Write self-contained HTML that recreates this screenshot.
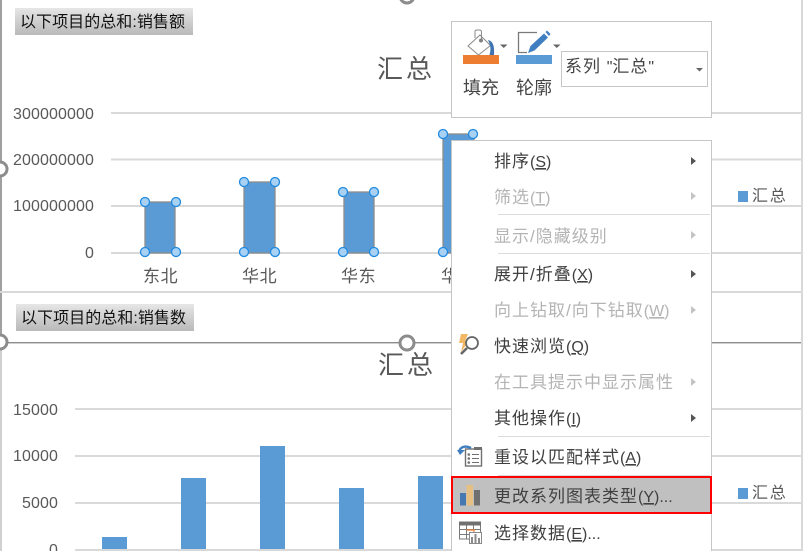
<!DOCTYPE html>
<html><head><meta charset="utf-8">
<style>
html,body{margin:0;padding:0;background:#fff}
svg{display:block}
text{font-family:"Liberation Sans","Noto Sans CJK SC",sans-serif}
.ax{font-size:16px;fill:#595959;letter-spacing:.1px}
.cat{font-size:17px;fill:#595959;letter-spacing:.6px}
.m{font-size:17px;fill:#404040;letter-spacing:1px}
.d{font-size:17px;fill:#b4b4b4;letter-spacing:1px}
.l{font-size:16px;letter-spacing:0}
.u{font-size:16px;letter-spacing:0;text-decoration:underline}
.h{fill:#a9d1f3;stroke:#1f8ae0;stroke-width:1.3}
.r{fill:#fff;stroke:#8c8c8c;stroke-width:3}
.g{stroke:#d9d9d9;stroke-width:2}
</style></head>
<body>
<svg width="803" height="551" viewBox="0 0 803 551" xmlns="http://www.w3.org/2000/svg" style="width:803px;height:551px;overflow:hidden">
<defs><linearGradient id="c" x1="0" y1="0" x2="0" y2="1"><stop offset="0" stop-color="#e6e6e6"/><stop offset="1" stop-color="#b9b9b9"/></linearGradient></defs>
<rect width="803" height="551" fill="#fff"/>

<!-- frames -->
<rect x="0" y="0" width="2" height="292" fill="#a0a0a0"/>
<rect x="0" y="292" width="2" height="50" fill="#a0a0a0"/>
<rect x="0" y="343" width="2" height="208" fill="#d0d0d0"/>
<rect x="0" y="291" width="803" height="2" fill="#d9d9d9"/>
<rect x="0" y="342" width="803" height="1.4" fill="#8c8c8c"/>
<rect x="801" y="0" width="2" height="551" fill="#d9d9d9"/>
<circle cx="0" cy="169" r="7" class="r"/>
<circle cx="0" cy="342" r="7" class="r"/>
<circle cx="407" cy="-4" r="7" class="r"/>
<circle cx="407" cy="343" r="7" class="r"/>

<!-- chips -->
<rect x="15" y="8" width="178" height="27" fill="url(#c)"/>
<text x="20" y="27" font-size="16" letter-spacing=".05" fill="#111">以下项目的总和:销售额</text>
<rect x="16" y="304" width="178" height="27" fill="url(#c)"/>
<text x="21" y="323" font-size="16" letter-spacing=".05" fill="#111">以下项目的总和:销售数</text>

<!-- titles -->
<text x="377" y="78" font-size="26" letter-spacing="3" fill="#595959">汇总</text>
<text x="378" y="374" font-size="26" letter-spacing="3" fill="#595959">汇总</text>

<!-- top chart -->
<g class="g"><line x1="111" x2="803" y1="113" y2="113"/><line x1="111" x2="803" y1="159.5" y2="159.5"/><line x1="111" x2="803" y1="206" y2="206"/><line x1="111" x2="803" y1="253" y2="253"/></g>
<g class="ax" text-anchor="end">
<text x="94" y="119">300000000</text><text x="94" y="165">200000000</text><text x="94" y="211">100000000</text><text x="94" y="258">0</text>
</g>
<g fill="#5b9bd5" stroke="#8c8c8c" stroke-width="1.3">
<rect x="145" y="202" width="30" height="51"/>
<rect x="244" y="182" width="31" height="71"/>
<rect x="344" y="192" width="30" height="61"/>
<rect x="443" y="134" width="31" height="119"/>
</g>
<g class="h">
<circle cx="145" cy="202" r="4.5"/><circle cx="176" cy="202" r="4.5"/><circle cx="145" cy="252" r="4.5"/><circle cx="176" cy="252" r="4.5"/>
<circle cx="244" cy="182" r="4.5"/><circle cx="275" cy="182" r="4.5"/><circle cx="244" cy="252" r="4.5"/><circle cx="275" cy="252" r="4.5"/>
<circle cx="343" cy="192" r="4.5"/><circle cx="374" cy="192" r="4.5"/><circle cx="343" cy="252" r="4.5"/><circle cx="374" cy="252" r="4.5"/>
<circle cx="443" cy="134" r="4.5"/><circle cx="473" cy="134" r="4.5"/><circle cx="443" cy="252" r="4.5"/>
</g>
<g class="cat">
<text x="143" y="282">东北</text><text x="242" y="282">华北</text><text x="341" y="282">华东</text><text x="441" y="282">华南</text>
</g>
<rect x="738" y="191" width="10" height="11" fill="#5b9bd5"/>
<text x="752" y="201" font-size="16" letter-spacing="1.8" fill="#595959">汇总</text>

<!-- bottom chart -->
<g class="g"><line x1="75" x2="803" y1="409" y2="409"/><line x1="75" x2="803" y1="456" y2="456"/><line x1="75" x2="803" y1="503" y2="503"/><line x1="75" x2="803" y1="550" y2="550"/></g>
<g class="ax" text-anchor="end">
<text x="58" y="415">15000</text><text x="58" y="461">10000</text><text x="58" y="508">5000</text><text x="58" y="555">0</text>
</g>
<g fill="#5b9bd5">
<rect x="102" y="537" width="25" height="12"/>
<rect x="181" y="478" width="25" height="71"/>
<rect x="260" y="446" width="25" height="103"/>
<rect x="339" y="488" width="25" height="61"/>
<rect x="418" y="476" width="25" height="73"/>
</g>
<rect x="738" y="488" width="10" height="11" fill="#5b9bd5"/>
<text x="752" y="498" font-size="16" letter-spacing="1.8" fill="#595959">汇总</text>

<!-- toolbar -->
<rect x="451.5" y="21.5" width="260" height="96" fill="#fff" stroke="#c6c6c6"/>
<path d="M480 35 L490.500 45.500 L478.500 55 L468 46 Z" fill="#fff" stroke="#8a8a8a" stroke-width="1"/>
<path d="M475 38 V31.500 Q475 30 477 30 H479.500 Q481.500 30 481.500 32 V40" fill="none" stroke="#8a8a8a" stroke-width="1"/>
<circle cx="481" cy="40.500" r="2" fill="#808080"/>
<path d="M488 40 Q495 41 494 55 H489.500 Q492 47 488 40Z" fill="#3f73b0"/>
<path d="M500 44.500 h7.500 l-3.750 3.500z" fill="#666"/>
<rect x="463" y="55" width="36" height="9" fill="#ed7d31"/>
<text x="463" y="94" font-size="18" fill="#444">填充</text>
<path d="M537 32.500 H518.500 V52.500 H527" fill="none" stroke="#7a7a7a" stroke-width="1.300"/>
<path d="M528 53 L530.500 46 L544 33.500 L548 37.500 L534.500 50.500 Z" fill="#3f7fc1"/>
<path d="M545.500 32 L547 30.500 L550.500 34 L549 36Z" fill="#3f7fc1"/>
<path d="M553 44.500 h7.500 l-3.750 3.500z" fill="#666"/>
<rect x="516" y="55" width="36" height="9" fill="#5b9bd5"/>
<text x="516" y="94" font-size="18" fill="#444">轮廓</text>
<rect x="561.500" y="51.500" width="146" height="35" fill="#fff" stroke="#c6c6c6"/>
<text x="565" y="72" font-size="17" letter-spacing="1" fill="#444">系列 <tspan class="l" style="font-family:'Liberation Sans'">"</tspan>汇总<tspan class="l" style="font-family:'Liberation Sans'">"</tspan></text>
<path d="M696 68 h7 l-3.500 3.500z" fill="#666"/>

<!-- menu -->
<rect x="451.500" y="140.500" width="260" height="412" fill="#fff" stroke="#c6c6c6"/>
<g fill="#dcdcdc">
<rect x="498" y="214" width="212" height="1"/><rect x="498" y="253" width="212" height="1"/>
<rect x="498" y="436" width="212" height="1"/><rect x="498" y="475" width="212" height="1"/>
</g>
<rect x="452" y="477" width="259" height="36" fill="#c0c0c0" stroke="#f00" stroke-width="2"/>

<text class="m" x="494" y="167">排序<tspan class="l">(</tspan><tspan class="u">S</tspan><tspan class="l">)</tspan></text>
<text class="d" x="494" y="203">筛选<tspan class="l">(</tspan><tspan class="u">T</tspan><tspan class="l">)</tspan></text>
<text class="d" x="494" y="242">显示/隐藏级别</text>
<text class="m" x="494" y="280">展开/折叠<tspan class="l">(</tspan><tspan class="u">X</tspan><tspan class="l">)</tspan></text>
<text class="d" x="494" y="316">向上钻取/向下钻取<tspan class="l">(</tspan><tspan class="u">W</tspan><tspan class="l">)</tspan></text>
<text class="m" x="494" y="352">快速浏览<tspan class="l">(</tspan><tspan class="u">Q</tspan><tspan class="l">)</tspan></text>
<text class="d" x="494" y="388">在工具提示中显示属性</text>
<text class="m" x="494" y="424">其他操作<tspan class="l">(</tspan><tspan class="u">I</tspan><tspan class="l">)</tspan></text>
<text class="m" x="494" y="463">重设以匹配样式<tspan class="l">(</tspan><tspan class="u">A</tspan><tspan class="l">)</tspan></text>
<text class="m" x="494" y="502">更改系列图表类型<tspan class="l">(</tspan><tspan class="u">Y</tspan><tspan class="l">)...</tspan></text>
<text class="m" x="494" y="539">选择数据<tspan class="l">(</tspan><tspan class="u">E</tspan><tspan class="l">)...</tspan></text>

<g fill="#555">
<path d="M691 157 l5 4 l-5 4z"/><path d="M691 270 l5 4 l-5 4z"/><path d="M691 414 l5 4 l-5 4z"/>
</g>
<g fill="#c4c4c4">
<path d="M691 192 l5 4 l-5 4z"/><path d="M691 231 l5 4 l-5 4z"/><path d="M691 306 l5 4 l-5 4z"/><path d="M691 378 l5 4 l-5 4z"/>
</g>

<!-- icons -->
<path d="M461 334 H468 L465 341 H469 L461 352 L463 343 H459 Z" fill="#f2b866"/>
<circle cx="472" cy="343" r="6" fill="#fff" stroke="#666" stroke-width="1.800"/>
<path d="M467 348 L461 354" stroke="#666" stroke-width="2.600" fill="none"/>

<rect x="465.500" y="449" width="16" height="17" fill="#fff" stroke="#707070" stroke-width="1.400"/>
<path d="M472 454.500 H479 M472 458.500 H479 M472 462.500 H479" stroke="#707070" fill="none"/>
<circle cx="468.800" cy="454.500" r="1.300" fill="#707070"/><circle cx="468.800" cy="458.500" r="1.300" fill="#707070"/><circle cx="468.800" cy="462.500" r="1.300" fill="#707070"/>
<rect x="474" y="447" width="8" height="3" fill="#707070"/>
<path d="M459 452 C460 447 465 445 471 448" fill="none" stroke="#3f7fc1" stroke-width="2.400"/>
<path d="M457 450 L465 450 L460 455 Z" fill="#3f7fc1"/>

<rect x="460" y="493" width="6" height="12.500" fill="#4679b2"/>
<rect x="466.500" y="485" width="6.500" height="20.500" fill="#e6c083"/>
<rect x="474" y="490" width="6" height="15.500" fill="#707070"/>

<g fill="none" stroke="#7a7a7a">
<rect x="459.500" y="522.500" width="21" height="16.500" fill="#fff"/>
<path d="M459.500 529.500 H480 M459.500 534.500 H469 M466.500 525 V539 M473.500 525 V530"/>
</g>
<rect x="459" y="521.500" width="22" height="4" fill="#707070"/>
<path d="M466.500 530 H474 V534" fill="none" stroke="#ed7d31" stroke-width="1.200"/>
<rect x="469.500" y="532.500" width="12" height="11" fill="#fff" stroke="#8a8a8a"/>
<path d="M472 537 v6 M475.500 534 v9 M479 538 v5" stroke="#8a8a8a" stroke-width="2"/>
</svg>
</body></html>
